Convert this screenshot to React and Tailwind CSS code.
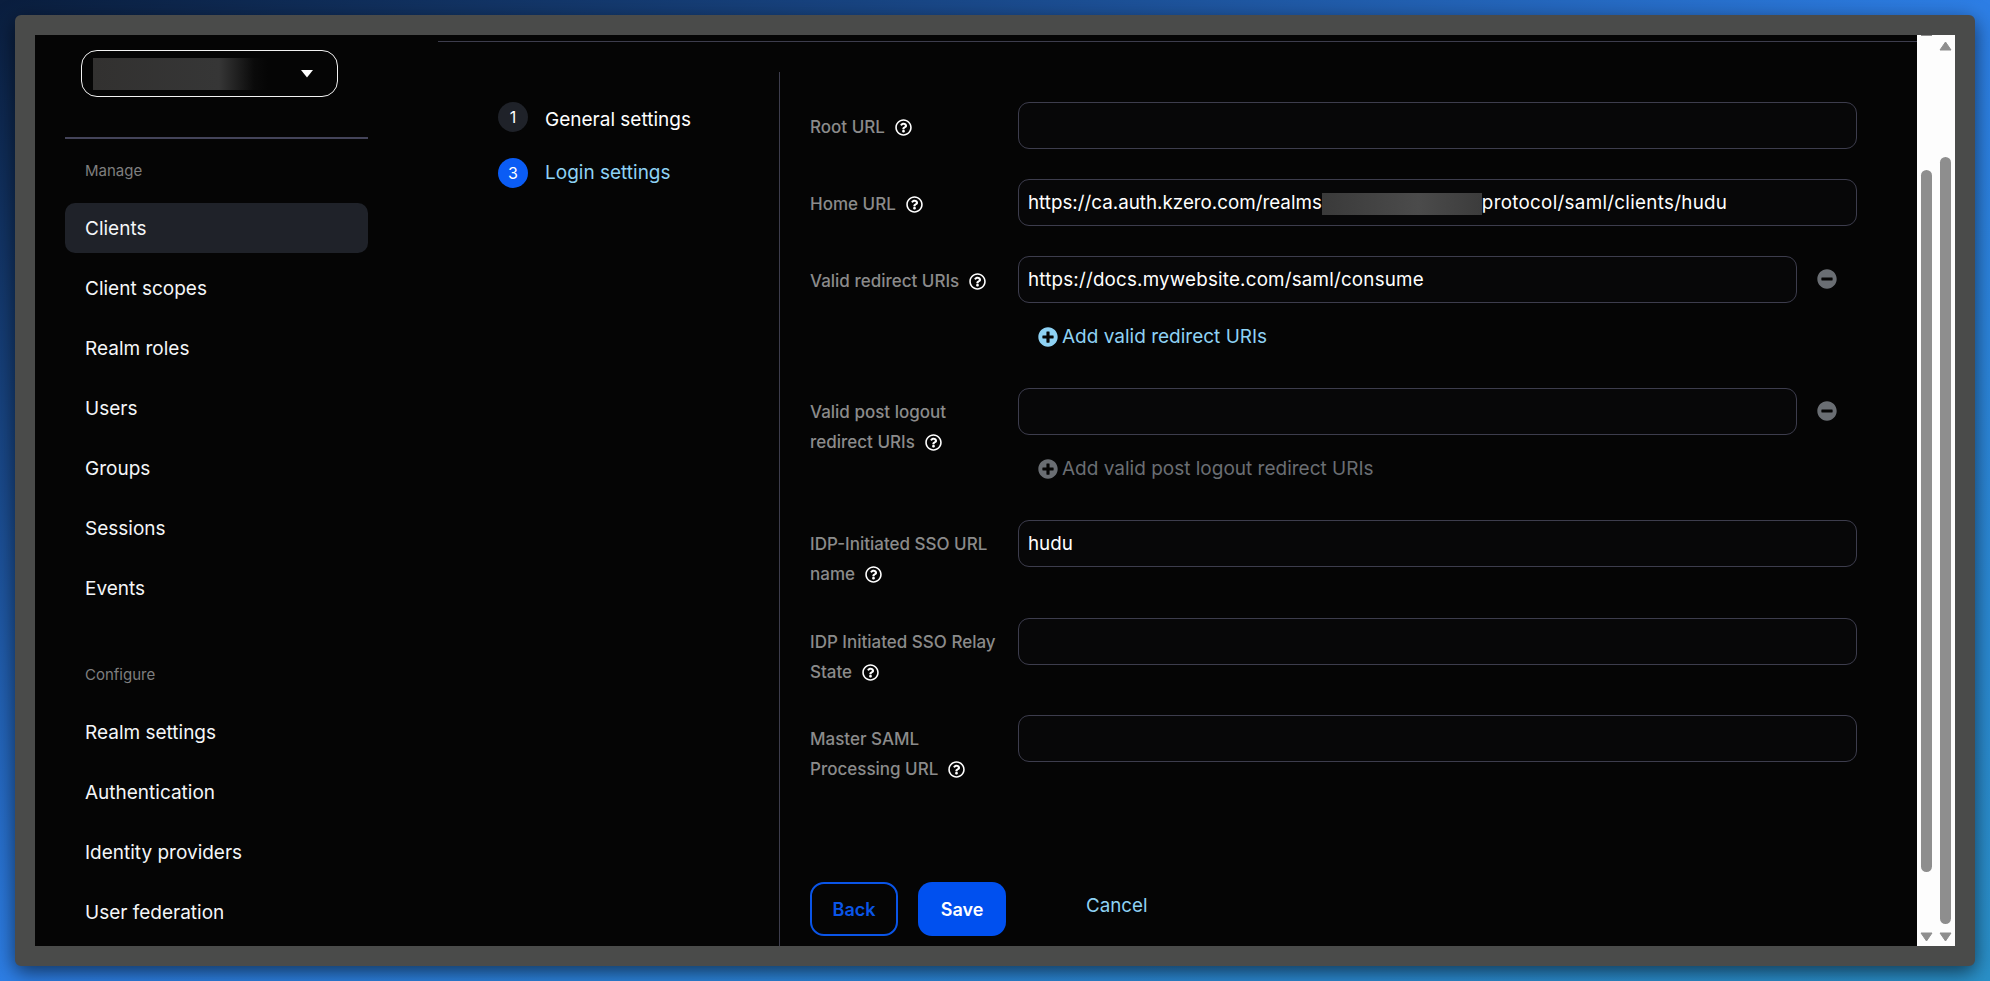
import React from "react";
import { FaRegQuestionCircle, FaPlusCircle, FaMinusCircle } from "react-icons/fa";

const manage = ["Client scopes", "Realm roles", "Users", "Groups", "Sessions", "Events"];
const configure = ["Realm settings", "Authentication", "Identity providers", "User federation"];

function NavItem({ label, active }) {
  return (
    <div className={`h-[50px] flex items-center pl-[20px] pt-[2px] rounded-[10px] text-[19px] text-[#f4f6f8] ${active ? "bg-[#1f2229]" : ""}`}>
      {label}
    </div>
  );
}

function Help() {
  return <FaRegQuestionCircle className="inline-block w-[17px] h-[17px] text-white ml-[10px] align-[-3px]" />;
}

function Label({ lines }) {
  return (
    <div className={`w-[208px] shrink-0 text-[17px] font-medium leading-[30px] text-[#8b8b8b] whitespace-nowrap ${lines.length > 1 ? "pt-[9px]" : "pt-[10px]"}`}>
      {lines.map((l, i) => (
        <div key={l}>
          {l}
          {i === lines.length - 1 && <Help />}
        </div>
      ))}
    </div>
  );
}

function Input({ children, w = "w-[839px]" }) {
  return (
    <div className={`${w} h-[47px] shrink-0 rounded-[11px] border border-[#3d3d4d] bg-[#070708] flex items-center pl-[9px] pt-[2px] text-[18.8px] text-white whitespace-nowrap`}>
      {children}
    </div>
  );
}

function AddLink({ label, disabled }) {
  return (
    <div className={`mt-[22px] ml-[20px] h-[24px] flex items-center gap-[4px] text-[19px] ${disabled ? "text-[#6a6e73]" : "text-[#8ed2f4]"}`}>
      <FaPlusCircle className="w-[20px] h-[20px]" />
      <span>{label}</span>
    </div>
  );
}

function Minus() {
  return <FaMinusCircle className="w-[20px] h-[20px] text-[#6a6e73] ml-[20px] mt-[13px] shrink-0" />;
}

function ArrowUp() {
  return (
    <svg width="13" height="10" viewBox="0 0 13 10" className="shrink-0">
      <path d="M6.5 1 L12 9 H1 Z" fill="#8e8e8e" stroke="#8e8e8e" strokeWidth="1" strokeLinejoin="round" />
    </svg>
  );
}

function ArrowDown() {
  return (
    <svg width="13" height="10" viewBox="0 0 13 10" className="shrink-0">
      <path d="M1 1 H12 L6.5 9 Z" fill="#8e8e8e" stroke="#8e8e8e" strokeWidth="1" strokeLinejoin="round" />
    </svg>
  );
}

export default function App() {
  return (
    <div className="w-[1990px] h-[981px] overflow-hidden p-[15px] font-['Inter',sans-serif] bg-[linear-gradient(to_bottom_right,#0a1e3e_0%,#1a4a8c_25%,#2d7ee5_50%,#2a90c8_100%)]">
      <div className="w-full h-full rounded-[6px] border-[20px] border-[#4a4b4a] bg-[#050505] flex overflow-hidden shadow-[0_6px_20px_rgba(0,0,0,0.6)]">
        {/* main */}
        <div className="flex-1 flex min-w-0">
          {/* sidebar */}
          <div className="w-[333px] ml-[30px] shrink-0">
            <div className="mt-[15px] ml-[16px] w-[257px] h-[47px] rounded-[16px] border border-[#f2f2f2] flex items-center pl-[11px] pr-[24px] justify-between">
              <div className="w-[175px] h-[32px] bg-[linear-gradient(90deg,#323130_0%,#363636_72%,#0a0a0a_92%,#050505_100%)]" />
              <svg width="12" height="8" viewBox="0 0 12 8">
                <path d="M0 0 H12 L6 7.5 Z" fill="#fff" />
              </svg>
            </div>
            <div className="mt-[40px] h-[2px] w-[303px] bg-[#44445a]" />
            <div className="mt-[20px] h-[24px] leading-[24px] pl-[20px] text-[15px] text-[#7f7f7f]">Manage</div>
            <div className="mt-[20px] w-[303px] flex flex-col gap-[10px]">
              <NavItem label="Clients" active />
              {manage.map((m) => (
                <NavItem key={m} label={m} />
              ))}
            </div>
            <div className="mt-[50px] h-[24px] leading-[24px] pl-[20px] text-[15px] text-[#7f7f7f]">Configure</div>
            <div className="mt-[20px] w-[303px] flex flex-col gap-[10px]">
              {configure.map((m) => (
                <NavItem key={m} label={m} />
              ))}
            </div>
          </div>
          {/* content */}
          <div className="flex-1 ml-[40px] min-w-0 flex flex-col">
            <div className="mt-[6px] h-px bg-[#3d3d4d]" />
            <div className="mt-[30px] flex flex-1 min-h-0">
              {/* stepper */}
              <div className="w-[342px] shrink-0 border-r border-[#3d3d4d] pt-[30px] pl-[60px]">
                <div className="flex items-start">
                  <div className="w-[30px] h-[30px] rounded-full bg-[#1f2229] flex items-center justify-center text-white text-[16px]">1</div>
                  <div className="ml-[17px] mt-[3px] leading-[30px] text-[19px] text-white">General settings</div>
                </div>
                <div className="mt-[23px] flex items-start">
                  <div className="w-[30px] h-[30px] rounded-full bg-[#0a5cf5] flex items-center justify-center text-white text-[16px]">3</div>
                  <div className="ml-[17px] leading-[30px] text-[19px] text-[#8ed2f4]">Login settings</div>
                </div>
              </div>
              {/* form */}
              <div className="flex-1 pt-[30px] pl-[30px] min-w-0">
                <div className="flex">
                  <Label lines={["Root URL"]} />
                  <Input />
                </div>
                <div className="flex mt-[30px]">
                  <Label lines={["Home URL"]} />
                  <Input>
                    <span>https://ca.auth.kzero.com/realms</span>
                    <span className="inline-block w-[160px] h-[22px] bg-[linear-gradient(90deg,#3a3a3a,#4b4b4b_60%,#3c3c3c)]" />
                    <span className="tracking-[0.3px]">protocol/saml/clients/hudu</span>
                  </Input>
                </div>
                <div className="flex mt-[30px]">
                  <Label lines={["Valid redirect URIs"]} />
                  <div>
                    <div className="flex">
                      <Input w="w-[779px]"><span className="tracking-[0.2px]">https://docs.mywebsite.com/saml/consume</span></Input>
                      <Minus />
                    </div>
                    <AddLink label="Add valid redirect URIs" />
                  </div>
                </div>
                <div className="flex mt-[39px]">
                  <Label lines={["Valid post logout", "redirect URIs"]} />
                  <div>
                    <div className="flex">
                      <Input w="w-[779px]" />
                      <Minus />
                    </div>
                    <AddLink label="Add valid post logout redirect URIs" disabled />
                  </div>
                </div>
                <div className="flex mt-[39px]">
                  <Label lines={["IDP-Initiated SSO URL", "name"]} />
                  <Input>hudu</Input>
                </div>
                <div className="flex mt-[29px]">
                  <Label lines={["IDP Initiated SSO Relay", "State"]} />
                  <Input />
                </div>
                <div className="flex mt-[28px]">
                  <Label lines={["Master SAML", "Processing URL"]} />
                  <Input />
                </div>
                <div className="flex items-start mt-[98px]">
                  <button className="w-[88px] h-[54px] rounded-[14px] border-2 border-[#0a55e8] text-[#0a55e8] text-[18px] font-semibold">Back</button>
                  <button className="ml-[20px] w-[88px] h-[54px] rounded-[14px] bg-[#0050ef] text-white text-[18px] font-semibold">Save</button>
                  <div className="ml-[80px] mt-[12px] leading-[24px] text-[18.8px] text-[#8ed2f4]">Cancel</div>
                </div>
              </div>
            </div>
          </div>
        </div>
        {/* scroll strip */}
        <div className="w-[38px] shrink-0 bg-[#fdfdfd] flex">
          <div className="ml-[3px] w-[13px] flex flex-col items-center">
            <div className="w-[11px] h-px bg-[#8e8e8e]" />
            <div className="mt-[134px] w-[11px] h-[702px] rounded-full bg-[#8e8e8e]" />
            <div className="mt-[60px]"><ArrowDown /></div>
          </div>
          <div className="ml-[6px] w-[13px] flex flex-col items-center">
            <div className="mt-[6px]"><ArrowUp /></div>
            <div className="mt-[106px] w-[11px] h-[767px] rounded-full bg-[#8e8e8e]" />
            <div className="mt-[8px]"><ArrowDown /></div>
          </div>
        </div>
      </div>
    </div>
  );
}
